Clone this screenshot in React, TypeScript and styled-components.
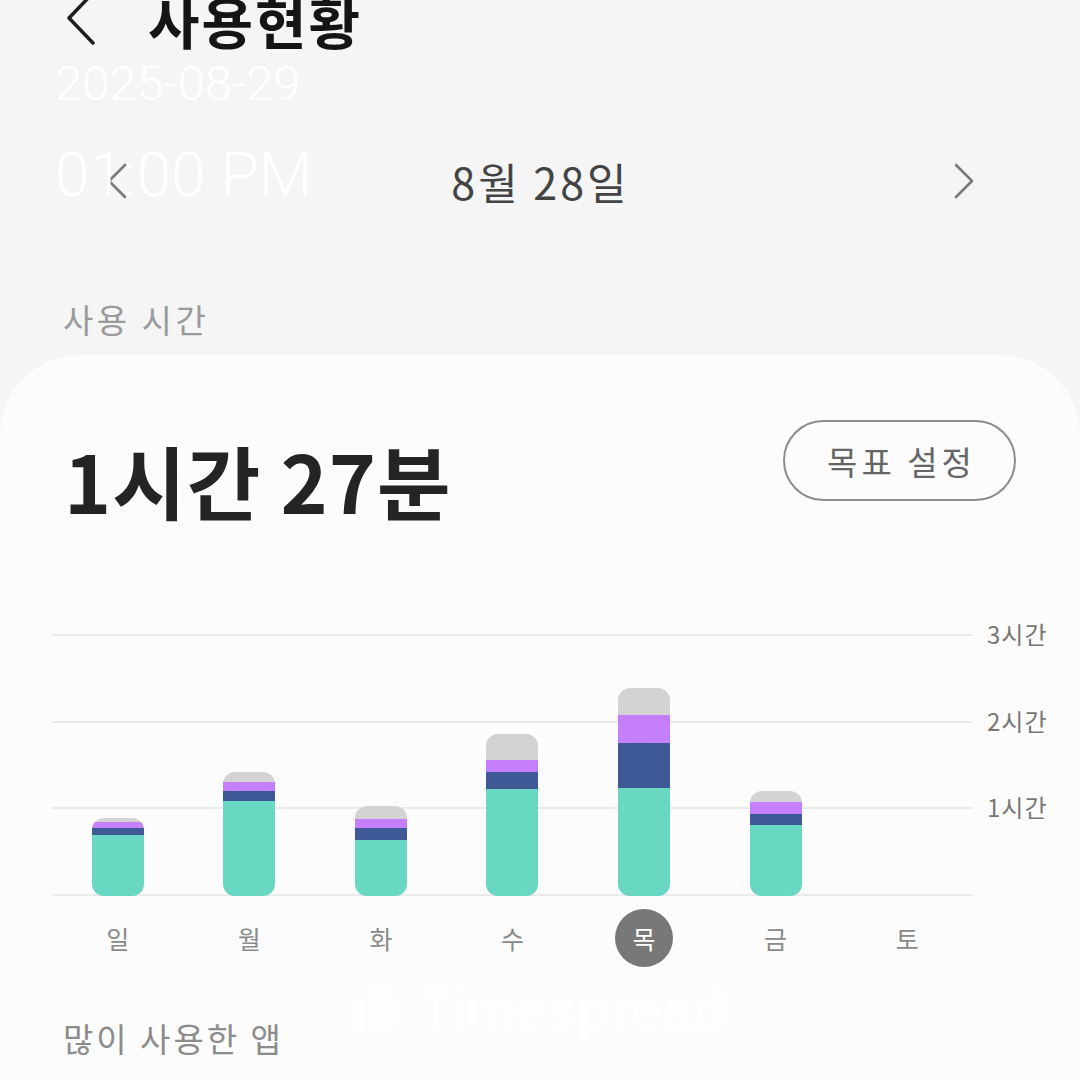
import React from 'react'
import styled, { createGlobalStyle } from 'styled-components'

const FONT = '"Noto Sans CJK KR", "Noto Sans", sans-serif'

interface IDay {
  label: string
  teal: number
  navy: number
  purple: number
  grey: number
}

// minutes per app group
const days: IDay[] = [
  { label: '일', teal: 42, navy: 5, purple: 4, grey: 3 },
  { label: '월', teal: 66, navy: 7, purple: 6, grey: 7 },
  { label: '화', teal: 39, navy: 8, purple: 6, grey: 9 },
  { label: '수', teal: 74, navy: 12, purple: 8, grey: 18 },
  { label: '목', teal: 75, navy: 31, purple: 19, grey: 19 },
  { label: '금', teal: 49, navy: 8, purple: 8, grey: 8 },
  { label: '토', teal: 0, navy: 0, purple: 0, grey: 0 },
]
const SELECTED = 4
const PX_PER_MIN = 260 / 180

const App: React.FC = () => {
  return (
    <Page>
      <GlobalStyle />
      <TopBar>
        <BackIcon viewBox="0 0 30 54">
          <polyline points="27,0 3,25 27,50" />
        </BackIcon>
        <Title>사용현황</Title>
      </TopBar>

      <DateNav>
        <NavIcon viewBox="0 0 20 36">
          <polyline points="18,2 2,18 18,34" />
        </NavIcon>
        <DateText>8월 28일</DateText>
        <NavIcon viewBox="0 0 20 36">
          <polyline points="2,2 18,18 2,34" />
        </NavIcon>
      </DateNav>

      <SectionLabel>사용 시간</SectionLabel>

      <Card>
        <SummaryRow>
          <TotalTime>1시간 27분</TotalTime>
          <GoalButton>목표 설정</GoalButton>
        </SummaryRow>

        <ChartRow>
          <Plot>
            {days.map((d) => (
              <BarSlot key={d.label}>
                {d.teal > 0 && (
                  <Bar>
                    <Segment $color="#d3d3d3" style={{ height: d.grey * PX_PER_MIN }} />
                    <Segment $color="#c57ffa" style={{ height: d.purple * PX_PER_MIN }} />
                    <Segment $color="#3e5996" style={{ height: d.navy * PX_PER_MIN }} />
                    <Segment $color="#69d8c3" style={{ height: d.teal * PX_PER_MIN }} />
                  </Bar>
                )}
              </BarSlot>
            ))}
          </Plot>
          <AxisLabels>
            <AxisLabel>3시간</AxisLabel>
            <AxisLabel>2시간</AxisLabel>
            <AxisLabel>1시간</AxisLabel>
          </AxisLabels>
        </ChartRow>

        <DayRow>
          {days.map((d, i) => (
            <DaySlot key={d.label}>
              <DayLabel $active={i === SELECTED}>{d.label}</DayLabel>
            </DaySlot>
          ))}
        </DayRow>

        <SectionLabel $light>많이 사용한 앱</SectionLabel>
      </Card>

      <Stamp>
        <StampDate>2025-08-29</StampDate>
        <StampTime>01:00 PM</StampTime>
      </Stamp>

      <Watermark>
        <svg width="40" height="44" viewBox="0 0 40 44">
          <rect x="0" y="2" width="9" height="7" fill="#fff" />
          <rect x="0" y="13" width="9" height="31" fill="#fff" />
          <rect x="13" y="2" width="27" height="7" fill="#fff" />
          <rect x="13" y="13" width="27" height="31" fill="#fff" />
        </svg>
        <span>Timespread</span>
      </Watermark>
    </Page>
  )
}

export default App

const GlobalStyle = createGlobalStyle`
  html, body {
    margin: 0;
    padding: 0;
    background: #f5f5f5;
  }
  * {
    box-sizing: border-box;
  }
`

const Page = styled.div`
position: relative;
width: 1080px;
height: 1080px;
overflow: hidden;
background: #f5f5f5;
font-family: ${FONT};
display: flex;
flex-direction: column;
`

const TopBar = styled.header`
display: flex;
align-items: center;
height: 54px;
margin-top: -7px;
padding-left: 66px;
`

const BackIcon = styled.svg`
width: 30px;
height: 54px;
fill: none;
stroke: #1e1e1e;
stroke-width: 3.5;
stroke-linecap: round;
stroke-linejoin: round;
`

const Title = styled.h1`
margin: 0 0 0 52px;
font-size: 56px;
line-height: 54px;
font-weight: 700;
color: #151515;
letter-spacing: 2px;
`

const DateNav = styled.div`
display: flex;
align-items: center;
justify-content: space-between;
height: 70px;
margin-top: 99px;
padding: 0 106px 0 107px;
`

const NavIcon = styled.svg`
width: 20px;
height: 36px;
fill: none;
stroke: #7a7a7a;
stroke-width: 2.6;
stroke-linecap: round;
stroke-linejoin: round;
`

const DateText = styled.div`
font-size: 43px;
color: #444;
letter-spacing: 3px;
`

const SectionLabel = styled.div<{ $light?: boolean }>`
margin-top: ${(p) => (p.$light ? '50px' : '83px')};
padding-left: 63px;
font-size: 33px;
line-height: 40px;
color: ${(p) => (p.$light ? '#8c8c8c' : '#9a9a9a')};
letter-spacing: ${(p) => (p.$light ? '3px' : '3.5px')};
`

const Card = styled.section`
flex: 1;
margin-top: 16px;
padding-top: 65px;
background: #fcfcfc;
border-radius: 80px 80px 0 0;
display: flex;
flex-direction: column;
`

const SummaryRow = styled.div`
display: flex;
justify-content: space-between;
align-items: flex-start;
padding: 0 64px 0 64px;
height: 104px;
`

const TotalTime = styled.div`
margin-top: 14px;
font-size: 80px;
line-height: 90px;
font-weight: 700;
color: #242424;
letter-spacing: 1px;
`

const GoalButton = styled.button`
width: 233px;
height: 81px;
border: 2px solid #8c8c8c;
border-radius: 41px;
background: transparent;
font-family: ${FONT};
font-size: 33px;
color: #666;
letter-spacing: 4px;
padding: 0 0 0 4px;
`

const ChartRow = styled.div`
display: flex;
margin-top: 110px;
padding-left: 52px;
gap: 14px;
`

const Plot = styled.div`
display: grid;
grid-template-columns: repeat(7, 1fr);
align-items: end;
width: 921px;
height: 262px;
background: repeating-linear-gradient(
  to bottom,
  #ebebeb 0px,
  #ebebeb 2px,
  transparent 2px,
  transparent 86.67px
);
`

const BarSlot = styled.div`
display: flex;
justify-content: center;
align-items: flex-end;
height: 100%;
`

const Bar = styled.div`
display: flex;
flex-direction: column;
width: 52px;
border-radius: 12px;
overflow: hidden;
`

const Segment = styled.div<{ $color: string }>`
background: ${(p) => p.$color};
`

const AxisLabels = styled.div`
display: flex;
flex-direction: column;
margin-top: -15px;
`

const AxisLabel = styled.div`
height: 86.67px;
line-height: 30px;
font-size: 24px;
color: #777;
letter-spacing: 1px;
`

const DayRow = styled.div`
display: grid;
grid-template-columns: repeat(7, 1fr);
width: 921px;
margin: 12px 0 0 52px;
height: 60px;
`

const DaySlot = styled.div`
display: flex;
justify-content: center;
align-items: center;
`

const DayLabel = styled.div<{ $active?: boolean }>`
display: flex;
justify-content: center;
align-items: center;
width: 58px;
height: 58px;
border-radius: 50%;
font-size: 25px;
background: ${(p) => (p.$active ? '#787878' : 'transparent')};
color: ${(p) => (p.$active ? '#fff' : '#8a8a8a')};
`

const Stamp = styled.div`
position: absolute;
left: 55px;
top: 55px;
display: flex;
flex-direction: column;
font-family: Roboto, "Noto Sans", sans-serif;
font-weight: 300;
color: rgba(255, 255, 255, 0.95);
`

const StampDate = styled.div`
font-size: 49px;
line-height: 58px;
`

const StampTime = styled.div`
margin-top: 26px;
font-size: 62px;
line-height: 72px;
`

const Watermark = styled.div`
position: absolute;
left: 355px;
top: 976px;
display: flex;
align-items: center;
gap: 22px;
font-family: "Liberation Sans", Arial, sans-serif;
font-weight: 700;
font-size: 57px;
letter-spacing: -1px;
color: #fff;
opacity: 0.85;
`
